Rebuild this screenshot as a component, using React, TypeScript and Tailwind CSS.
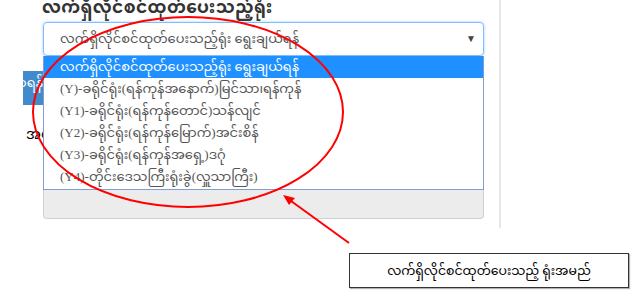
import React from 'react';

const options = [
  'လက်ရှိလိုင်စင်ထုတ်ပေးသည့်ရုံး ရွေးချယ်ရန်',
  '(Y)-ခရိုင်ရုံး(ရန်ကုန်အနောက်)မြင်သာ၊ရန်ကုန်',
  '(Y1)-ခရိုင်ရုံး(ရန်ကုန်တောင်)သန်လျင်',
  '(Y2)-ခရိုင်ရုံး(ရန်ကုန်မြောက်)အင်းစိန်',
  '(Y3)-ခရိုင်ရုံး(ရန်ကုန်အရှေ့)ဒဂုံ',
  '(Y4)-တိုင်းဒေသကြီးရုံးခွဲ(လှူသာကြီး)',
];

export default function App() {
  return (
    <div className="relative w-[632px] h-[307px] overflow-hidden bg-white text-[#333] font-['Liberation_Serif','Noto_Sans_Myanmar','Padauk',serif]">
      <div className="flex w-[501px] h-[228px] border-r-2 border-[#e6e6e6] pl-[23px]">
        {/* page content peeking out behind the dropdown */}
        <div className="w-[20px] flex flex-col overflow-hidden">
          <div className="mt-[71px] h-[34px] bg-[#428bca] text-white text-[13px] leading-[20px] flex justify-end pt-[2px] whitespace-nowrap">
            ရှာရန်
          </div>
          <div className="mt-[20px] pl-[3px] text-[14px] leading-[20px] text-black whitespace-nowrap">အမည်</div>
        </div>

        <div className="w-[441px] flex flex-col">
          <label className="h-[22px] -ml-px text-[17px] font-bold leading-[15px] tracking-[0.4px] whitespace-nowrap">
            လက်ရှိလိုင်စင်ထုတ်ပေးသည့်ရုံး
          </label>
          <div className="h-[34px] rounded-[4px] border border-[#80bdff] shadow-[0_0_3px_rgba(102,175,233,0.6)] flex items-center pl-[16px] pr-[7px] text-[13px] leading-[22px] text-[#555]">
            <span className="flex-1 whitespace-nowrap">{options[0]}</span>
            <span className="text-[10px] text-[#444]">▼</span>
          </div>
          <div className="h-[134px] border-x border-b border-[#7f9ed6] bg-white">
            {options.map((o, i) => (
              <div
                key={i}
                className={`h-[22px] flex items-center pl-[16px] text-[13px] leading-[22px] whitespace-nowrap ${i === 0 ? 'bg-[#1e90ff] text-white' : 'text-[#555]'}`}
              >
                {o}
              </div>
            ))}
          </div>
          <div className="h-[29px] bg-[#ececec] border-b border-x border-[#d0d0d0] rounded-b-[4px]" />
        </div>
      </div>

      <div className="mt-[25px] ml-[349px] w-[280px] h-[35px] border border-[#333] shadow-[1px_1px_1px_rgba(0,0,0,0.3)] flex items-center justify-center text-[12.5px] leading-[20px] text-black whitespace-nowrap">
        လက်ရှိလိုင်စင်ထုတ်ပေးသည့် ရုံးအမည်
      </div>

      {/* annotation overlay */}
      <svg className="absolute inset-0 pointer-events-none" width="632" height="307" viewBox="0 0 632 307">
        <ellipse cx="188" cy="112" rx="155" ry="95" fill="none" stroke="#ff0000" strokeWidth="2" />
        <line x1="349" y1="243" x2="291" y2="201" stroke="#ff0000" strokeWidth="2" />
        <polygon points="283,195 295,198 289,205" fill="#ff0000" />
      </svg>
    </div>
  );
}
